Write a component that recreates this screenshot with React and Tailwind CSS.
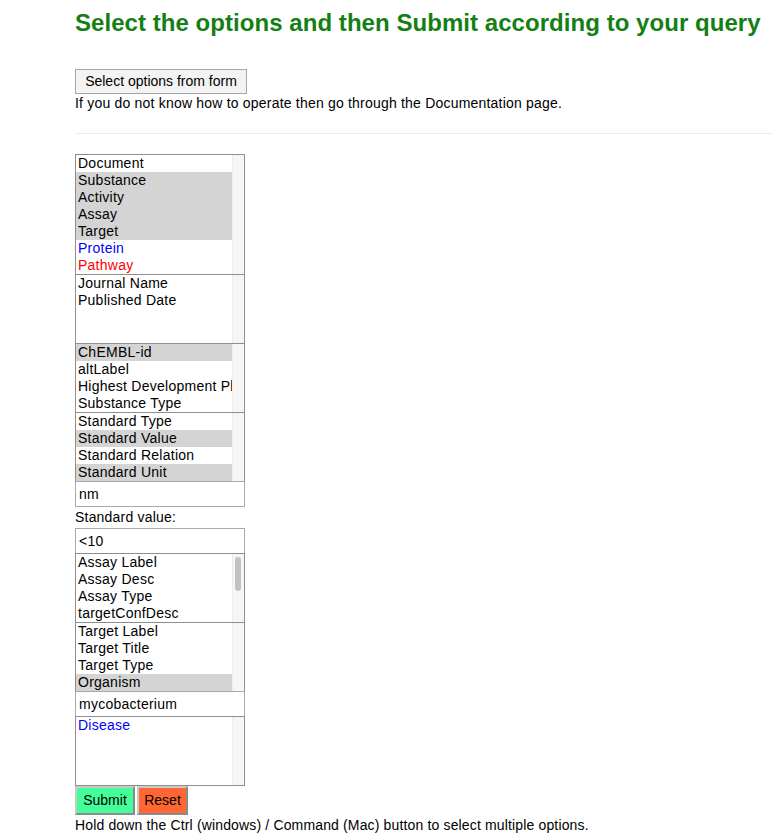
import React from 'react';

const font = { fontFamily: '"Liberation Sans", Arial, sans-serif' };

// each option: [label, selected?, colour class]
const boxes = {
  entity: [
    ['Document'], ['Substance', true], ['Activity', true], ['Assay', true], ['Target', true],
    ['Protein', false, 'text-[#0000ff]'], ['Pathway', false, 'text-[#ff0000]'],
  ],
  document: [['Journal Name'], ['Published Date'], [''], ['']],
  substance: [['ChEMBL-id', true], ['altLabel'], ['Highest Development Phase'], ['Substance Type']],
  activity: [['Standard Type'], ['Standard Value', true], ['Standard Relation'], ['Standard Unit', true]],
  assay: [['Assay Label'], ['Assay Desc'], ['Assay Type'], ['targetConfDesc']],
  target: [['Target Label'], ['Target Title'], ['Target Type'], ['Organism', true]],
  disease: [['Disease', false, 'text-[#0000ff]'], [''], [''], ['']],
};

function ListBox({ items, thumb, first }) {
  return (
    <div className={`flex w-[170px] border border-[#8e8e8e] bg-white ${first ? '' : '-mt-px'}`}>
      <div className="flex-1 overflow-hidden">
        {items.map(([label, sel, color], i) => (
          <div key={i}
            className={`h-[17px] overflow-hidden whitespace-nowrap pl-[2px] text-[14px] leading-[17px] tracking-[0.25px] ${sel ? 'bg-[#d4d4d4]' : ''} ${color || 'text-black'}`}>
            {label}
          </div>
        ))}
      </div>
      <div className="relative w-[12px] border-l border-[#ececec] bg-[#f6f6f6]">
        {thumb && <div className="absolute left-[2px] top-[3px] h-[34px] w-[6px] rounded-full bg-[#c2c2c2]" />}
      </div>
    </div>
  );
}

function TextBox({ value }) {
  return (
    <div className="-mt-px h-[26px] w-[170px] border border-[#a9a9a9] bg-white pl-[3px] text-[14px] leading-[24px] tracking-[0.25px]">
      {value}
    </div>
  );
}

export default function App() {
  return (
    <div className="min-h-[837px] bg-white text-black" style={font}>
      <div className="pl-[75px]">
        <h1 className="pt-[9px] text-[24px] font-bold leading-[28px] tracking-[0.05px] text-[#148014]">
          Select the options and then Submit according to your query
        </h1>

        <button className="mt-[32px] h-[25px] w-[172px] border border-[#a6a6a6] bg-[#f3f3f3] text-[14px] leading-[23px]">
          Select options from form
        </button>
        <p className="text-[14px] leading-[18px] tracking-[0.2px]">
          If you do not know how to operate then go through the Documentation page.
        </p>

        <div className="mt-[21px] h-px bg-[#ececec]" />

        <div className="mt-[20px] flex flex-col">
          <ListBox items={boxes.entity} first />
          <ListBox items={boxes.document} />
          <ListBox items={boxes.substance} />
          <ListBox items={boxes.activity} />
          <TextBox value="nm" />
          <div className="h-[22px] text-[14px] leading-[20px] tracking-[0.2px]">Standard value:</div>
          <TextBox value="<10" />
          <ListBox items={boxes.assay} thumb />
          <ListBox items={boxes.target} />
          <TextBox value="mycobacterium" />
          <ListBox items={boxes.disease} />
          <div className="flex gap-[2px]">
            <button className="h-[29px] w-[60px] border-2 border-[#8a8a8a] border-l-[#c9c9c9] border-t-[#c9c9c9] bg-[#44ff99] text-[14px]">
              Submit
            </button>
            <button className="h-[29px] w-[51px] border-2 border-[#8a8a8a] border-l-[#c9c9c9] border-t-[#c9c9c9] bg-[#ff6633] text-[14px]">
              Reset
            </button>
          </div>
          <p className="mt-px whitespace-nowrap text-[14px] leading-[18px] tracking-[0.15px]">
            Hold down the Ctrl (windows) / Command (Mac) button to select multiple options.
          </p>
        </div>
      </div>
      <div className="mt-[3px] h-px bg-[#e6e6e6]" />
    </div>
  );
}
